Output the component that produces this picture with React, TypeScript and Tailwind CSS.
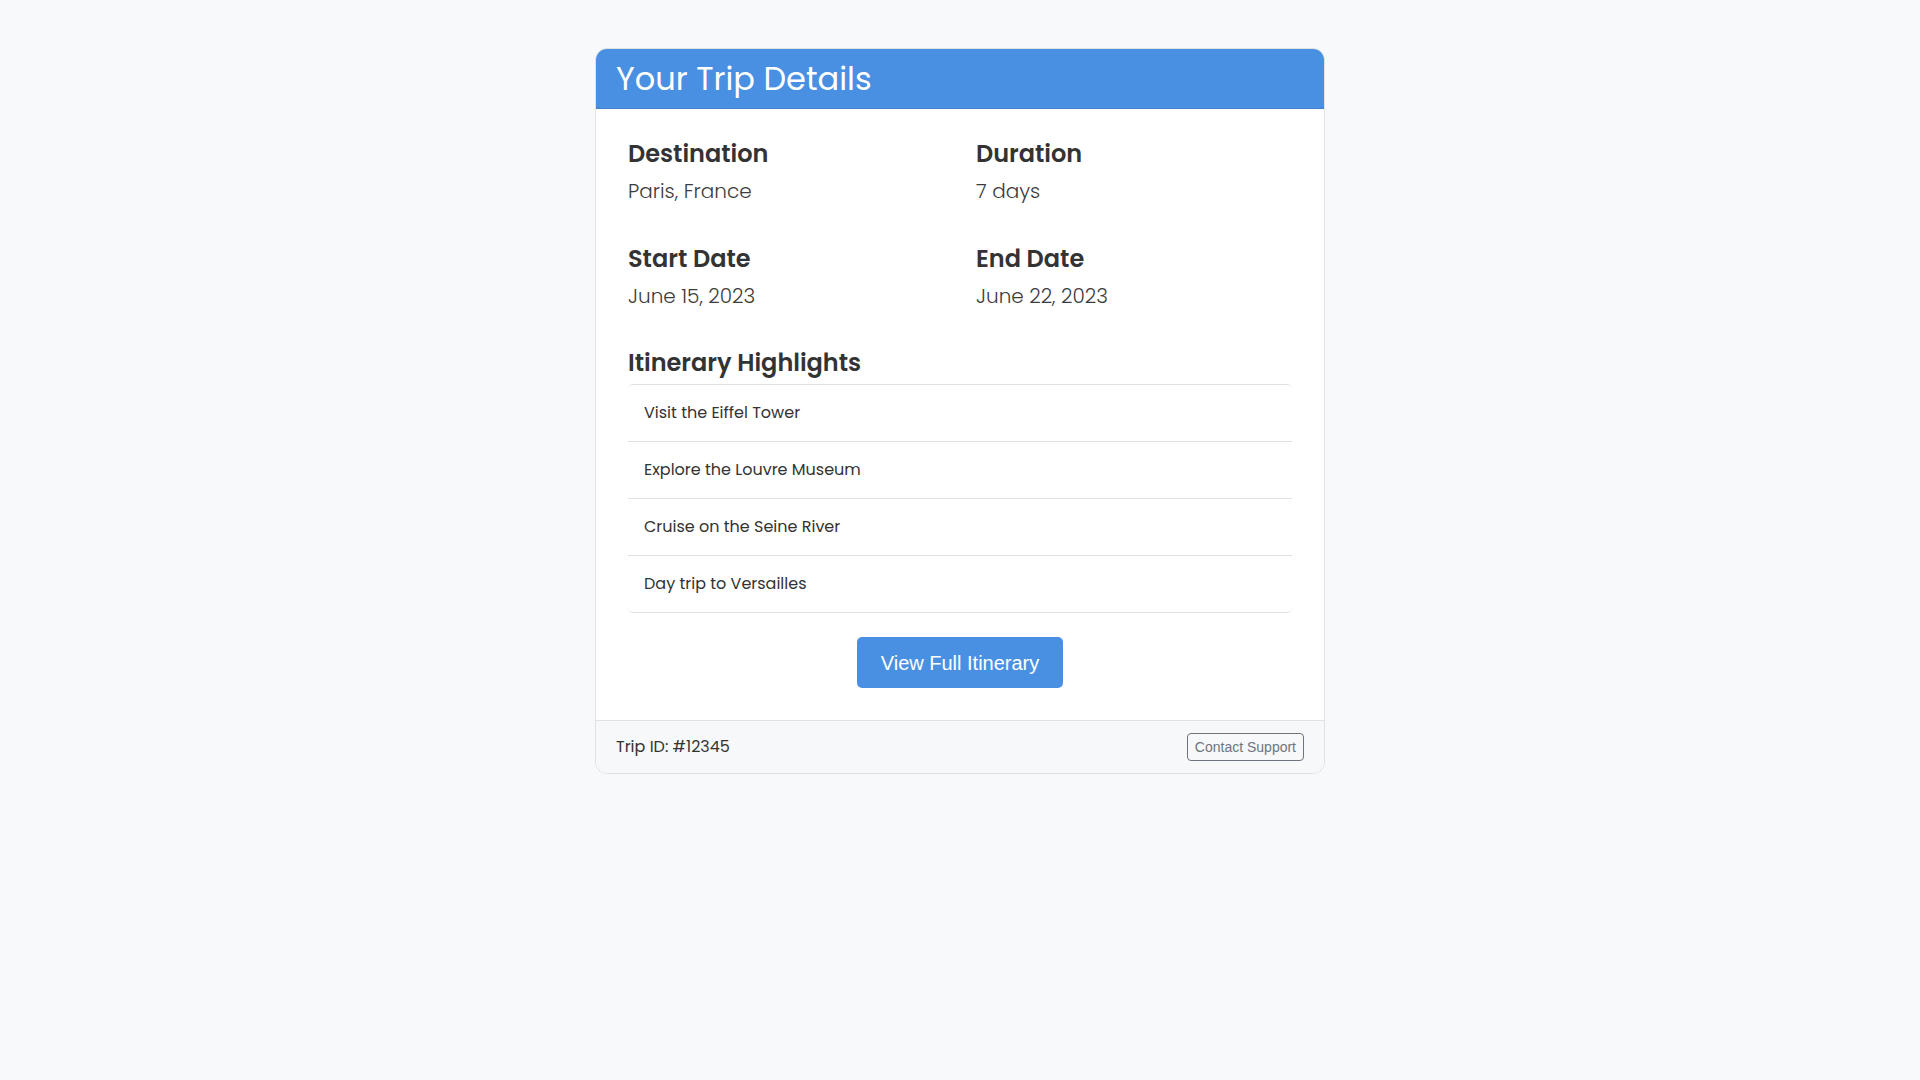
import React from "react";

const trip = {
  destination: "Paris, France",
  duration: "7 days",
  startDate: "June 15, 2023",
  endDate: "June 22, 2023",
  id: "#12345",
  highlights: [
    "Visit the Eiffel Tower",
    "Explore the Louvre Museum",
    "Cruise on the Seine River",
    "Day trip to Versailles",
  ],
};

function Detail({ label, value }: { label: string; value: string }) {
  return (
    <div>
      <h3 className="mb-2 text-[24px] font-semibold leading-[1.2] text-[#333]">
        {label}
      </h3>
      <p className="text-[20px] font-light leading-[28px] text-[#3c3c3c]">
        {value}
      </p>
    </div>
  );
}

export default function App() {
  return (
    <div
      className="min-h-screen bg-[#f8f9fa] pt-12"
      style={{ fontFamily: '"Poppins", "Open Sans", sans-serif' }}
    >
      <div className="mx-auto w-[730px] overflow-hidden rounded-xl border border-[#dfe1e5] bg-white">
        <div className="flex h-[60px] items-center border-b border-black/10 bg-[#4a90e2] px-5 pt-[2px]">
          <h2 className="text-[32px] font-normal leading-[1.2] text-white">
            Your Trip Details
          </h2>
        </div>

        <div className="px-8 pb-8 pt-[31px]">
          <div className="grid grid-cols-2 gap-x-8 gap-y-[40px]">
            <Detail label="Destination" value={trip.destination} />
            <Detail label="Duration" value={trip.duration} />
            <Detail label="Start Date" value={trip.startDate} />
            <Detail label="End Date" value={trip.endDate} />
          </div>

          <h3 className="mb-[7px] mt-[39px] text-[24px] font-semibold leading-[1.2] text-[#333]">
            Itinerary Highlights
          </h3>
          <ul className="rounded-[5px] border-b border-t border-[#dee2e6]">
            {trip.highlights.map((h, i) => (
              <li
                key={h}
                className={
                  i > 0
                    ? "border-t border-[#dee2e6] px-4 py-4 text-[16px] leading-6 text-[#333]"
                    : "px-4 py-4 text-[16px] leading-6 text-[#333]"
                }
              >
                {h}
              </li>
            ))}
          </ul>

          <div className="mt-6 flex justify-center">
            <button
              type="button"
              className="h-[51px] rounded-[5px] bg-[#4a90e2] px-6 text-[20px] text-white"
              style={{ fontFamily: '"Liberation Sans", Arial, sans-serif' }}
            >
              View Full Itinerary
            </button>
          </div>
        </div>

        <div className="flex h-[53px] items-center justify-between border-t border-[#dee2e6] bg-[#f7f8fa] px-5">
          <span className="text-[16px] text-[#333]">Trip ID: {trip.id}</span>
          <button
            type="button"
            className="h-[28px] rounded-[4px] border border-[#6c757d] px-[7px] text-[14px] text-[#6c757d]"
            style={{ fontFamily: '"Liberation Sans", Arial, sans-serif' }}
          >
            Contact Support
          </button>
        </div>
      </div>
    </div>
  );
}
